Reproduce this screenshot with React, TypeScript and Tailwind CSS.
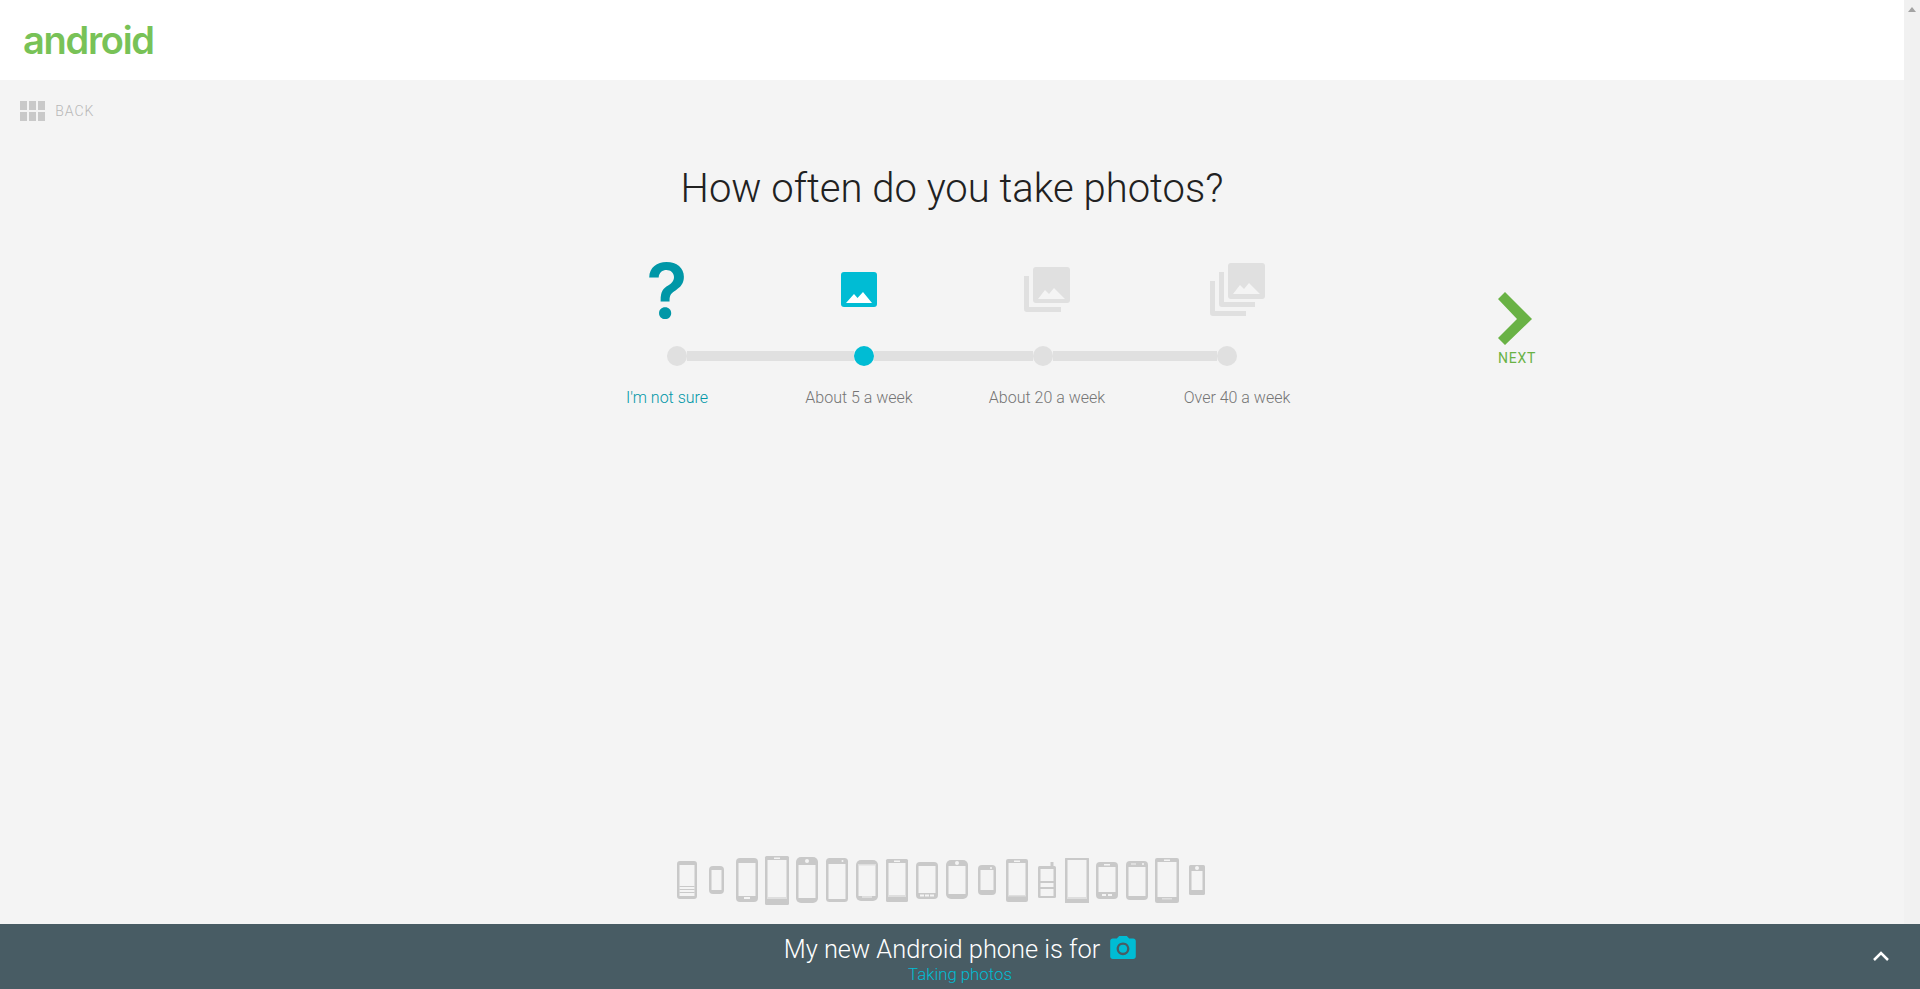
import React from "react";

type Phone = {
  x: number; y: number; w: number; h: number; r: number;
  top: number; bottom: number; side?: number;
  extra?: React.ReactNode;
};

const G = "#c9c9c9";
const BG = "#f4f4f4";
const L = "#dedede";

// x and y are relative to the phones strip (677, 855)
const phones: Phone[] = [
  { x: 0, y: 6, w: 20, h: 38, r: 3, top: 4, bottom: 3, extra: <>
    <rect x="2.5" y="25" width="15" height="1" fill={G} /><rect x="2.5" y="28" width="15" height="1" fill={G} /><rect x="2.5" y="31" width="15" height="1" fill={G} /></> },
  { x: 32, y: 11, w: 15, h: 28, r: 4, top: 4, bottom: 4 },
  { x: 59, y: 3, w: 22, h: 44, r: 4, top: 5, bottom: 6, extra: <rect x="8" y="39" width="6" height="2" fill={BG} /> },
  { x: 88, y: 1, w: 24, h: 49, r: 1.5, top: 4, bottom: 6, extra: <><rect x="9" y="1.5" width="6" height="1.5" fill={BG} /><rect x="2.5" y="41" width="19" height="2" fill={L} /></> },
  { x: 119, y: 2, w: 22, h: 46, r: 5, top: 8, bottom: 5, extra: <circle cx="11" cy="4" r="2" fill={BG} /> },
  { x: 149, y: 3, w: 22, h: 44, r: 3.5, top: 6, bottom: 3, extra: <circle cx="16.5" cy="3" r="1" fill={BG} /> },
  { x: 179, y: 5, w: 22, h: 41, r: 5, top: 4, bottom: 5, extra: <><rect x="6" y="36" width="10" height="2" fill={L} /><rect x="2" y="4" width="18" height="1.5" fill={L} /></> },
  { x: 209, y: 4, w: 22, h: 43, r: 1.5, top: 4, bottom: 5, extra: <><rect x="8" y="1.5" width="6" height="1.5" fill={BG} /><rect x="2" y="36" width="18" height="2" fill={L} /></> },
  { x: 239, y: 7, w: 22, h: 37, r: 4, top: 4, bottom: 6, extra: <><rect x="4" y="32.5" width="4" height="2" fill={BG} /><rect x="9" y="32.5" width="4" height="2" fill={BG} /><rect x="14" y="32.5" width="4" height="2" fill={BG} /></> },
  { x: 269, y: 5, w: 22, h: 39, r: 5, top: 6, bottom: 5, extra: <circle cx="11" cy="3" r="2" fill={BG} /> },
  { x: 301, y: 10, w: 18, h: 30, r: 4, top: 5, bottom: 5, extra: <circle cx="13" cy="3" r="1" fill={BG} /> },
  { x: 329, y: 4, w: 22, h: 43, r: 2, top: 4, bottom: 6, extra: <><rect x="8" y="1.5" width="6" height="1.5" fill={BG} /><rect x="2" y="36" width="18" height="1.5" fill={L} /></> },
  { x: 361, y: 11, w: 18, h: 32, r: 1.5, top: 3, bottom: 2, extra: <><rect x="12.5" y="-4" width="3" height="5" fill={G} /><rect x="2" y="15" width="14" height="2" fill={G} /><rect x="2" y="21" width="14" height="2" fill={G} /></> },
  { x: 388, y: 3, w: 24, h: 45, r: 0.5, top: 2, bottom: 5, extra: <rect x="2" y="39" width="20" height="2" fill={L} /> },
  { x: 419, y: 7, w: 22, h: 37, r: 4, top: 5, bottom: 7, extra: <><rect x="6" y="32" width="4" height="2" fill={BG} /><rect x="12" y="32" width="4" height="2" fill={BG} /><rect x="8" y="2" width="6" height="1.5" fill={BG} /></> },
  { x: 449, y: 6, w: 22, h: 39, r: 4, top: 6, bottom: 4, extra: <><rect x="5" y="2.5" width="5" height="1" fill={BG} /><circle cx="17" cy="3" r="1" fill={BG} /></> },
  { x: 478, y: 3, w: 24, h: 45, r: 2, top: 4, bottom: 6, extra: <><rect x="9" y="1.5" width="6" height="1.5" fill={BG} /><rect x="7" y="40" width="10" height="1.5" fill={L} /></> },
  { x: 512, y: 10, w: 16, h: 30, r: 1.5, top: 6, bottom: 5, extra: <circle cx="8" cy="3" r="2" fill={BG} /> },
];

function PhoneStrip() {
  return (
    <svg width="528" height="52" viewBox="0 0 528 52" className="block overflow-visible">
      {phones.map((p, i) => {
        const s = p.side ?? 2.5;
        return (
          <g key={i} transform={`translate(${p.x} ${p.y})`}>
            <rect width={p.w} height={p.h} rx={p.r} fill={G} />
            <rect x={s} y={p.top} width={p.w - s * 2} height={p.h - p.top - p.bottom} fill={BG} />
            {p.extra}
          </g>
        );
      })}
    </svg>
  );
}

const Photo = () => (
  <svg width="36" height="35" viewBox="0 0 36 35" className="block">
    <rect width="36" height="35" rx="3" fill="#00bcd4" />
    <polygon points="5,31 13,22 16.5,26 22,20 31,31" fill="#ffffff" />
  </svg>
);
const Photos = () => (
  <svg width="46" height="45" viewBox="0 0 46 45" className="block">
    <path d="M0 9h5v31h32v5H3a3 3 0 0 1-3-3z" fill="#e0e0e0" />
    <rect x="9" width="37" height="36" rx="3" fill="#e0e0e0" />
    <polygon points="14,32 21,23 25,27 30,21 41,32" fill={BG} />
  </svg>
);
const ManyPhotos = () => (
  <svg width="55" height="53" viewBox="0 0 55 53" className="block">
    <path d="M0 18h5v30h31v5H3a3 3 0 0 1-3-3z" fill="#e0e0e0" />
    <path d="M9 9h5v30h31v5H12a3 3 0 0 1-3-3z" fill="#e0e0e0" />
    <rect x="18" width="37" height="36" rx="3" fill="#e0e0e0" />
    <polygon points="23,31 30,22 34,26 39,20 50,31" fill={BG} />
  </svg>
);

export default function App() {
  return (
    <div className="flex h-screen overflow-hidden bg-[#f4f4f4] font-['Roboto',sans-serif]">
      <div className="flex w-[1904px] flex-col">
        <header className="flex h-20 shrink-0 items-center bg-white pl-[23px]">
          <span className="font-['Inter',sans-serif] text-[38px] font-semibold leading-none tracking-[-1.3px] text-[#78c257]">android</span>
        </header>

        <div className="flex items-center gap-[10px] pl-5 pt-[21px]">
          <div className="grid grid-cols-3 gap-[1.5px]">
            {[0, 1, 2, 3, 4, 5].map((i) => (
              <div key={i} className="h-[9px] w-[7.4px] bg-[#c9c9c9]" />
            ))}
          </div>
          <span className="text-sm font-light leading-5 tracking-[1px] text-[#b8b8b8]">BACK</span>
        </div>

        <h1 className="mt-[44px] text-center text-[40px] font-light leading-[48px] text-[#212121]">How often do you take photos?</h1>

        <div className="mt-[46px] flex pl-[571px]">
          <div className="w-[764px]">
            <div className="flex h-[61px] items-center text-center">
              <div className="flex w-[192px] justify-center">
                <span className="font-['Inter',sans-serif] text-[76px] font-semibold leading-none text-[#0097a7]">?</span>
              </div>
              <div className="flex w-[192px] justify-center"><Photo /></div>
              <div className="flex w-[184px] justify-center"><Photos /></div>
              <div className="flex w-[196px] justify-center"><ManyPhotos /></div>
            </div>
            <div className="ml-[96px] mt-[26px] flex items-center">
              <div className="h-5 w-5 rounded-full bg-[#e0e0e0]" />
              <div className="h-[10px] w-[167px] bg-[#e0e0e0]" />
              <div className="h-5 w-5 rounded-full bg-[#00bcd4]" />
              <div className="h-[10px] w-[159px] bg-[#e0e0e0]" />
              <div className="h-5 w-5 rounded-full bg-[#e0e0e0]" />
              <div className="h-[10px] w-[164px] bg-[#e0e0e0]" />
              <div className="h-5 w-5 rounded-full bg-[#e0e0e0]" />
            </div>
            <div className="mt-[22px] flex text-center text-base font-light leading-5 text-[#757575]">
              <div className="w-[192px] text-[#0097a7]">I'm not sure</div>
              <div className="w-[192px]">About 5 a week</div>
              <div className="w-[184px]">About 20 a week</div>
              <div className="w-[196px]">Over 40 a week</div>
            </div>
          </div>
          <div className="ml-[163px] mt-[33px] flex flex-col">
            <svg width="34" height="53" viewBox="0 0 34 53" className="block">
              <polygon points="0,7 7,0 34,27 7,53 0,46 19,27" fill="#69b245" />
            </svg>
            <span className="mt-[3px] text-sm font-normal leading-5 tracking-[0.8px] text-[#69b245]">NEXT</span>
          </div>
        </div>

        <div className="mt-auto mb-[82px] flex pl-[677px]">
          <PhoneStrip />
        </div>
      </div>

      <div className="flex w-4 flex-col items-center bg-[#f1f1f1] pt-[7px]">
        <svg width="8" height="5" viewBox="0 0 8 5" className="block"><polygon points="4,0 8,5 0,5" fill="#a3a3a3" /></svg>
      </div>

      <footer className="fixed bottom-0 left-0 flex h-[65px] w-full flex-col items-center bg-[#485c64] pt-2 text-center">
        <div className="flex items-center gap-[10px] text-[25.4px] font-light leading-[34px] text-white">
          <span>My new Android phone is for</span>
          <svg width="26" height="23" viewBox="2 2 20 18" className="mb-[3px] block">
            <path fillRule="evenodd" fill="#00bcd4" d="M9 2L7.17 4H4c-1.1 0-2 .9-2 2v12c0 1.1.9 2 2 2h16c1.1 0 2-.9 2-2V6c0-1.1-.9-2-2-2h-3.17L15 2H9zm3 15c-2.76 0-5-2.24-5-5s2.24-5 5-5 5 2.24 5 5-2.24 5-5 5z" />
            <circle cx="12" cy="12" r="3.2" fill="#00bcd4" />
          </svg>
        </div>
        <div className="-mt-[2px] text-[16.8px] font-light leading-5 text-[#00bcd4]">Taking photos</div>
        <svg width="16" height="10" viewBox="0 0 16 10" className="absolute right-[31px] top-[27px] block">
          <polyline points="1,9 8,2 15,9" fill="none" stroke="#ffffff" strokeWidth="2.5" />
        </svg>
      </footer>
    </div>
  );
}
